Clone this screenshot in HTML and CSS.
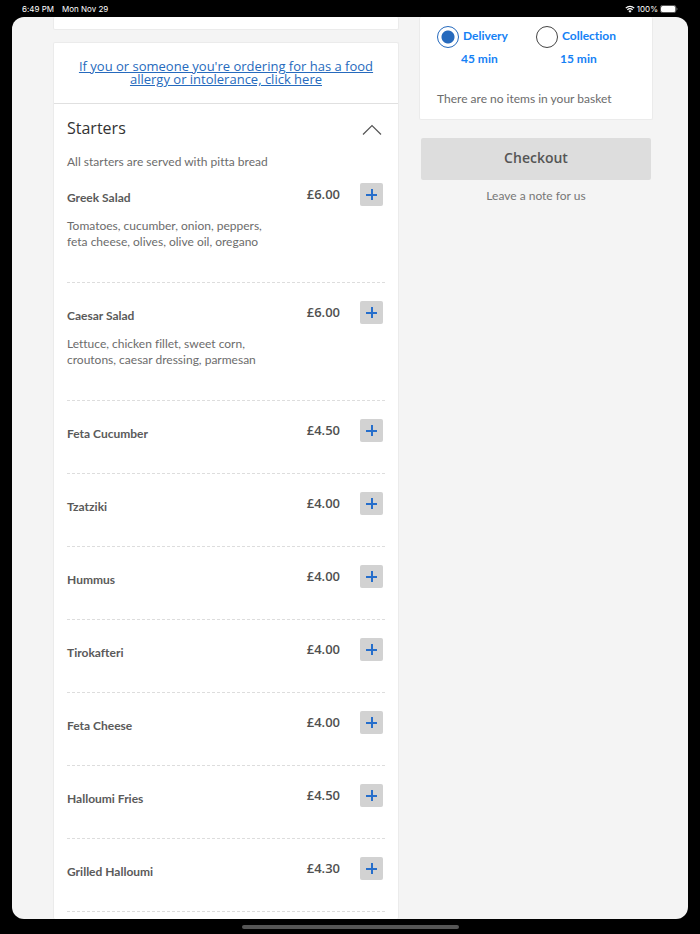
FILE: index.html
```html
<!DOCTYPE html>
<html lang="en">
<head>
    <meta charset="UTF-8">
    <meta name="viewport" content="width=device-width, initial-scale=1.0">
    <title>Menu - Starters</title>
    <link rel="stylesheet" href="styles.css">
</head>
<body>
    <header class="status-bar">
        <span>6:49 PM</span>
        <span class="date">Mon Nov 29</span>
        <svg class="wifi" viewBox="0 0 20 16" aria-hidden="true">
            <path d="M1.5 6.2a12.2 12.2 0 0 1 17 0M4.7 9.6a7.6 7.6 0 0 1 10.6 0" fill="none" stroke="#fff" stroke-width="2.4"/>
            <path d="M10 15.4l-3.2-3.3a4.6 4.6 0 0 1 6.4 0z" fill="#fff"/>
        </svg>
        <span>100%</span>
        <svg class="battery" viewBox="0 0 36 16" aria-hidden="true">
            <rect x="0.8" y="0.8" width="31" height="14.4" rx="4" fill="none" stroke="#8a8a8a" stroke-width="1.4"/>
            <rect x="2" y="2" width="28.6" height="12" rx="3" fill="#fff"/>
            <path d="M33.4 5.4v5.2c2-.8 2-4.4 0-5.2z" fill="#8a8a8a"/>
        </svg>
    </header>

    <div class="screen">
        <main class="menu">
            <div class="card previous"></div>
            <div class="card category">
                <div class="allergy">
                    <a href="#">If you or someone you're ordering for has a food allergy or intolerance, click here</a>
                </div>
                <section class="starters">
                    <div class="category-header">
                        <h2>Starters</h2>
                        <button class="toggle-btn" type="button" aria-label="Collapse Starters">
                            <svg viewBox="0 0 20 12"><path d="M1 10.5L10 1.5l9 9" fill="none" stroke="#555" stroke-width="1.2"/></svg>
                        </button>
                    </div>
                    <p class="note">All starters are served with pitta bread</p>
                    <ul class="items">
                        <li class="item large">
                            <div class="info">
                                <h3>Greek Salad</h3>
                                <p>Tomatoes, cucumber, onion, peppers,<br>feta cheese, olives, olive oil, oregano</p>
                            </div>
                            <span class="price">£6.00</span>
                            <button class="add-btn" type="button" aria-label="Add Greek Salad"></button>
                        </li>
                        <li class="item large">
                            <div class="info">
                                <h3>Caesar Salad</h3>
                                <p>Lettuce, chicken fillet, sweet corn,<br>croutons, caesar dressing, parmesan</p>
                            </div>
                            <span class="price">£6.00</span>
                            <button class="add-btn" type="button" aria-label="Add Caesar Salad"></button>
                        </li>
                        <li class="item">
                            <div class="info"><h3>Feta Cucumber</h3></div>
                            <span class="price">£4.50</span>
                            <button class="add-btn" type="button" aria-label="Add Feta Cucumber"></button>
                        </li>
                        <li class="item">
                            <div class="info"><h3>Tzatziki</h3></div>
                            <span class="price">£4.00</span>
                            <button class="add-btn" type="button" aria-label="Add Tzatziki"></button>
                        </li>
                        <li class="item">
                            <div class="info"><h3>Hummus</h3></div>
                            <span class="price">£4.00</span>
                            <button class="add-btn" type="button" aria-label="Add Hummus"></button>
                        </li>
                        <li class="item">
                            <div class="info"><h3>Tirokafteri</h3></div>
                            <span class="price">£4.00</span>
                            <button class="add-btn" type="button" aria-label="Add Tirokafteri"></button>
                        </li>
                        <li class="item">
                            <div class="info"><h3>Feta Cheese</h3></div>
                            <span class="price">£4.00</span>
                            <button class="add-btn" type="button" aria-label="Add Feta Cheese"></button>
                        </li>
                        <li class="item">
                            <div class="info"><h3>Halloumi Fries</h3></div>
                            <span class="price">£4.50</span>
                            <button class="add-btn" type="button" aria-label="Add Halloumi Fries"></button>
                        </li>
                        <li class="item">
                            <div class="info"><h3>Grilled Halloumi</h3></div>
                            <span class="price">£4.30</span>
                            <button class="add-btn" type="button" aria-label="Add Grilled Halloumi"></button>
                        </li>
                    </ul>
                </section>
            </div>
        </main>

        <aside class="sidebar">
            <div class="card basket">
                <div class="methods">
                    <div class="method">
                        <input type="radio" id="delivery" name="method" checked>
                        <label for="delivery">Delivery</label>
                        <span class="time">45 min</span>
                    </div>
                    <div class="method">
                        <input type="radio" id="collection" name="method">
                        <label for="collection">Collection</label>
                        <span class="time">15 min</span>
                    </div>
                </div>
                <p class="empty">There are no items in your basket</p>
            </div>
            <button class="checkout-btn" type="button">Checkout</button>
            <a class="leave-note" href="#">Leave a note for us</a>
        </aside>
    </div>

    <footer class="home-bar"><div class="home-indicator"></div></footer>
</body>
</html>
```

FILE: styles.css
```css
* {
    box-sizing: border-box;
}

body {
    margin: 0;
    height: 100vh;
    display: flex;
    flex-direction: column;
    background-color: #000;
    color: #6c6c6c;
    font-family: Lato, "Open Sans", sans-serif;
    font-size: 12px;
    line-height: 16px;
    font-variant-ligatures: none;
}

h2, h3, p, ul {
    margin: 0;
    padding: 0;
}

button {
    border: none;
    padding: 0;
    font-family: inherit;
    cursor: pointer;
}

/* Status bar */
.status-bar {
    display: flex;
    align-items: center;
    height: 17px;
    flex: none;
    padding: 0 22px;
    color: #fff;
    font-family: Inter, sans-serif;
    font-size: 8px;
}

.date {
    margin-left: 8px;
}

.wifi {
    width: 10px;
    height: 8px;
    margin-left: auto;
    margin-right: 2px;
}

.battery {
    width: 18px;
    height: 8px;
    margin-left: 2px;
}

.screen {
    flex: 1;
    min-height: 0;
    margin: 0 12px;
    padding: 0 35px 0 41px;
    overflow: hidden;
    border-radius: 12px;
    background-color: #f4f4f4;
    display: grid;
    grid-template-columns: 346fr 234fr;
    gap: 20px;
}

.card {
    background-color: #fff;
    border: 1px solid #ebebeb;
    border-radius: 2px;
}

/* Menu */
.menu {
    display: flex;
    flex-direction: column;
}

.previous {
    flex: none;
    height: 13px;
    border-top: none;
    margin-bottom: 12px;
}

.category {
    flex: 1;
    border-bottom: none;
}

.allergy {
    padding: 17px 20px;
    height: 61px;
    border-bottom: 1px solid #e0e0e0;
    text-align: center;
    font-family: "Open Sans", sans-serif;
    font-size: 13px;
    line-height: 13px;
    font-weight: 500;
}

.allergy a {
    color: #266abd;
}

.starters {
    padding: 14px 13px 0;
}

.category-header {
    display: flex;
    justify-content: space-between;
    align-items: center;
    padding-right: 3px;
}

h2 {
    color: #333;
    font-family: "Open Sans", sans-serif;
    font-size: 16px;
    line-height: 20px;
    font-weight: 400;
}

.toggle-btn {
    width: 20px;
    height: 20px;
    background: none;
}

.toggle-btn svg {
    display: block;
    width: 20px;
    height: 12px;
    margin-top: 4px;
}

.note {
    margin-top: 16px;
}

.items {
    list-style: none;
    margin-top: -5px;
}

.item {
    display: flex;
    align-items: flex-start;
    min-height: 73px;
    padding: 18px 2px 0 0;
    border-bottom: 1px dashed #ddd;
}

.item.large {
    min-height: 118px;
}

.info {
    flex: 1;
    padding-top: 7px;
}

h3 {
    color: #5a5a5a;
    font-size: 12px;
    line-height: 16px;
    font-weight: 700;
}

.info p {
    margin-top: 12px;
    white-space: nowrap;
}

.price {
    margin-right: 20px;
    color: #505050;
    font-family: "Open Sans", sans-serif;
    font-size: 13px;
    line-height: 23px;
    font-weight: 600;
}

.add-btn {
    width: 23px;
    height: 23px;
    border-radius: 2px;
    background: linear-gradient(#266ecb, #266ecb) center / 11px 2px no-repeat,
                linear-gradient(#266ecb, #266ecb) center / 2px 11px no-repeat,
                #d2d2d2;
}

/* Basket */
.basket {
    border-top: none;
    padding: 9px 17px 12px;
}

.methods {
    display: grid;
    grid-template-columns: 1fr 1fr;
}

.method {
    display: grid;
    grid-template-columns: 22px auto;
    justify-content: start;
    column-gap: 4px;
    row-gap: 3px;
    color: #1581f5;
    font-weight: 700;
}

.method label {
    line-height: 20px;
}

.method input {
    appearance: none;
    width: 22px;
    height: 22px;
    margin: 0;
    border: 1px solid #444;
    border-radius: 50%;
    background-color: #fff;
}

.method input:checked {
    border-color: #266abd;
    background: radial-gradient(circle, #266abd 6px, #fff 7px);
}

.time {
    grid-column: 1 / 3;
    padding-left: 24px;
}

.empty {
    margin-top: 24px;
}

.checkout-btn {
    display: block;
    width: calc(100% - 4px);
    height: 42px;
    margin: 18px 2px 0;
    padding-bottom: 3px;
    border-radius: 2px;
    background-color: #ddd;
    color: #555;
    font-family: "Open Sans", sans-serif;
    font-size: 14px;
    font-weight: 600;
}

.leave-note {
    display: block;
    margin-top: 8px;
    color: #777;
    text-align: center;
    text-decoration: none;
}

.home-bar {
    display: flex;
    align-items: center;
    justify-content: center;
    height: 15px;
    flex: none;
}

.home-indicator {
    width: 31%;
    height: 4px;
    border-radius: 2px;
    background-color: #555;
}
```
